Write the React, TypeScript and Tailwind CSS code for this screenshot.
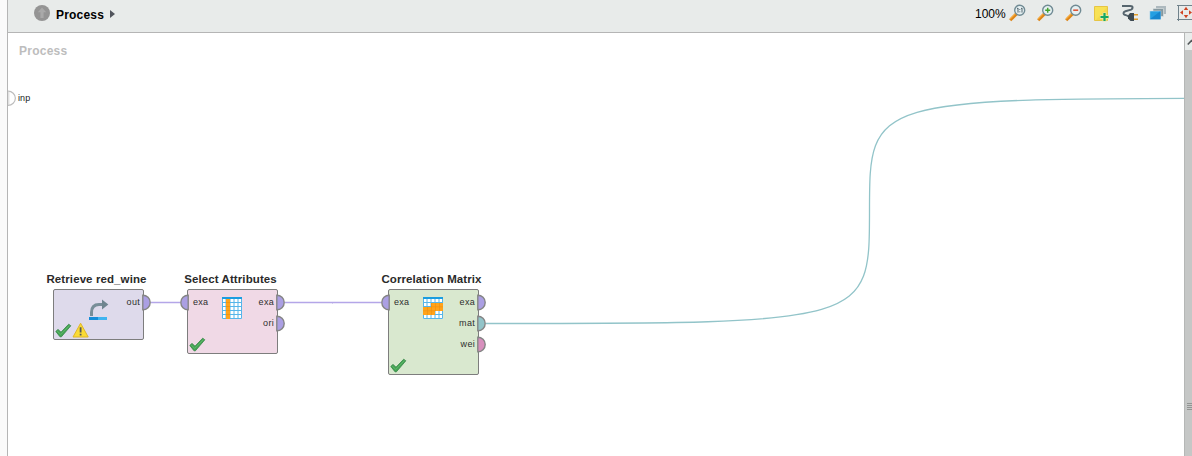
import React from "react";

type Port = { label: string; fill: string };
type Operator = {
  title: string;
  place: string;
  box: string;
  inputs: Port[];
  outputs: Port[];
  icon: React.ReactNode;
  warning?: boolean;
};

const PURPLE = "#ab9fe3";
const TEAL = "#92c4c9";
const PINK = "#d78fbd";

function Magnifier({ children }: { children: React.ReactNode }) {
  return (
    <svg width="18" height="18" viewBox="0 0 18 18" className="shrink-0">
      <path d="M1.2 16.2 7.8 9.6" stroke="#dd8417" strokeWidth="3" />
      <path d="M1 15 7 9" stroke="#f6ab3c" strokeWidth="1.1" />
      <circle cx="10.7" cy="6.2" r="5" fill="#e6f0f2" stroke="#708b94" strokeWidth="1.4" />
      {children}
    </svg>
  );
}

function NoteIcon() {
  return (
    <svg width="18" height="18" viewBox="0 0 18 18" className="shrink-0">
      <path d="M1.5 2.5h13v14h-13z" fill="#f8e255" stroke="#e6c544" />
      <path d="M3 16 14 3v13z" fill="#f0d343" opacity=".55" />
      <path d="M11.5 8.5v9M7 13h9" stroke="#f0e7a0" strokeWidth="4" />
      <path d="M11.5 9v8M7.5 13h8" stroke="#16a864" strokeWidth="2.2" />
    </svg>
  );
}

function PlugIcon() {
  return (
    <svg width="18" height="18" viewBox="0 0 18 18" className="shrink-0">
      <path d="M1 2h8.3c2.9 0 2.9 2.7.8 3.6L4.4 7.2C1.7 8.2 2 10.4 4.2 10.9c1.5.4 2.8 1 4 2.1" fill="none" stroke="#56656e" strokeWidth="2" />
      <path d="M7 11.5 9 9h4v8H9.5L7 14.5z" fill="#3e4a52" />
      <path d="M13 10.8h4M13 15.3h4" stroke="#e29c28" strokeWidth="1.5" />
    </svg>
  );
}

function LayersIcon() {
  return (
    <svg width="18" height="18" viewBox="0 0 18 18" className="shrink-0">
      <path d="M7 2h10v8H7z" fill="#adb9be" />
      <path d="M4 4.5h10.5v8H4z" fill="#84989f" stroke="#e3e8e9" strokeWidth=".6" />
      <path d="M.8 7h11v8.5H.8z" fill="#249fe2" stroke="#e8ebea" strokeWidth=".5" />
      <path d="M1 15.3 11.5 7v8.3z" fill="#1686cf" />
    </svg>
  );
}

function FitIcon() {
  return (
    <svg width="18" height="18" viewBox="0 0 18 18" className="shrink-0">
      <path d="M1.5 1v16M16.5 1v16M0 1.5h18M0 15.5h18" stroke="#70828b" />
      <path d="M9 2.8 11.2 6H6.8zM9 14.2 6.8 11h4.4zM3 8.5 6 6.3v4.4zM15 8.5l-3 2.2V6.3z" fill="#cf4424" />
    </svg>
  );
}

function Check() {
  return (
    <svg width="17" height="15" viewBox="0 0 17 15">
      <path d="M.8 8.4 3 6.4 6 9.2 13.7 1.2 15.8 2.8 6.4 13.8H5z" fill="#43a454" stroke="#358545" strokeWidth=".8" strokeLinejoin="round" />
      <path d="M2.2 8.2 5.8 11.4 14.5 2.5" stroke="#63b86b" strokeWidth=".9" fill="none" />
    </svg>
  );
}

function Warning() {
  return (
    <svg width="17" height="16" viewBox="0 0 17 16">
      <path d="M8.6 1.2 16.2 15H1z" fill="#fadb35" stroke="#dfb52a" strokeWidth="1" strokeLinejoin="round" />
      <path d="M8.6 5.2v5.3M8.6 11.7v1.8" stroke="#56595a" strokeWidth="1.8" />
    </svg>
  );
}

function RetrieveIcon() {
  return (
    <svg width="20" height="21" viewBox="0 0 20 21">
      <path d="M2.5 17v-3.5c0-5.5 3-8 7.5-8h4" stroke="#788e98" strokeWidth="3" fill="none" />
      <path d="M13 .5 19.3 5.5 13 10.5z" fill="#6f858f" />
      <path d="M0 18h9v3H0z" fill="#168dd8" />
      <path d="M9 18h9v3H9z" fill="#40b4f0" />
    </svg>
  );
}

function TableIcon({ matrix = false }: { matrix?: boolean }) {
  return (
    <svg width="20" height="22" viewBox="0 0 20 22">
      <path d="M0 0h20v22H0z" fill="#fff" />
      <path d="M.5 2v19.5h19V2M4 2v20M8 2v20M12 2v20M16 2v20M0 5.5h20M0 9.5h20M0 13.5h20M0 17.5h20" stroke="#55b5ea" fill="none" />
      <path d="M0 0h20v2H0z" fill="#1b9de0" />
      {matrix ? (
        <>
          <path d="M8 6h12v8h-8v4H0v-8h8z" fill="#ffa31a" />
          <path d="M8.5 6v12M4.5 10v8M12.5 6v8M16.5 6v8M8 9.8h12M0 13.8h12" stroke="#ef9012" strokeWidth=".7" />
        </>
      ) : (
        <>
          <path d="M4 2h4v20H4z" fill="#ffa31a" />
          <path d="M4 5.5h4M4 9.5h4M4 13.5h4M4 17.5h4" stroke="#ed9010" strokeWidth=".8" />
        </>
      )}
    </svg>
  );
}

function Connector({ port, input = false }: { port: Port; input?: boolean }) {
  return (
    <div className={`flex h-[21px] items-center ${input ? "flex-row" : "flex-row-reverse"}`}>
      <svg width="9" height="17" viewBox="0 0 9 17" className={`shrink-0 ${input ? "-ml-2" : "-mr-2 -scale-x-100"}`}>
        <path d="M8.2 1.2A7.4 7.3 0 0 0 8.2 15.8z" fill={port.fill} stroke="#858585" strokeWidth="1.4" />
      </svg>
      <span className={`pb-px text-[9px] leading-none tracking-[0.3px] text-[#2e2e2e] ${input ? "ml-1" : "mr-[2px]"}`}>{port.label}</span>
    </div>
  );
}

const operators: Operator[] = [
  {
    title: "Retrieve red_wine",
    place: "left-[45px] top-[256px] h-[51px]",
    box: "bg-[#dedaeb]",
    inputs: [],
    outputs: [{ label: "out", fill: PURPLE }],
    icon: <RetrieveIcon />,
    warning: true,
  },
  {
    title: "Select Attributes",
    place: "left-[179px] top-[256px] h-[65px]",
    box: "bg-[#f0d9e6]",
    inputs: [{ label: "exa", fill: PURPLE }],
    outputs: [
      { label: "exa", fill: PURPLE },
      { label: "ori", fill: PURPLE },
    ],
    icon: <TableIcon />,
  },
  {
    title: "Correlation Matrix",
    place: "left-[380px] top-[256px] h-[86px]",
    box: "bg-[#d9e8cf]",
    inputs: [{ label: "exa", fill: PURPLE }],
    outputs: [
      { label: "exa", fill: PURPLE },
      { label: "mat", fill: TEAL },
      { label: "wei", fill: PINK },
    ],
    icon: <TableIcon matrix />,
  },
];

function OperatorNode({ op }: { op: Operator }) {
  return (
    <div className={`absolute w-[91px] ${op.place}`}>
      <div className="absolute -top-4 left-[43.5px] -translate-x-1/2 text-[11.5px] leading-[13px] font-bold tracking-[0.1px] whitespace-nowrap text-[#2a2a2a]">
        {op.title}
      </div>
      <div className={`flex h-full justify-between rounded-[2px] border border-[#7d7d7d] pt-[2px] ${op.box}`}>
        <div className="w-[30px]">
          {op.inputs.map((p) => (
            <Connector key={p.label} port={p} input />
          ))}
        </div>
        <div className="w-[30px]">
          {op.outputs.map((p) => (
            <Connector key={p.label} port={p} />
          ))}
        </div>
      </div>
      <div className={`absolute ${op.warning ? "left-9 top-[10px]" : "left-[35px] top-2"}`}>{op.icon}</div>
      <div className="absolute bottom-[2px] left-[2px] flex items-end">
        <Check />
        {op.warning && <Warning />}
      </div>
    </div>
  );
}

export default function App() {
  return (
    <div className="flex h-[456px] w-[1192px] overflow-hidden bg-[#fafafa] font-['Liberation_Sans',Arial,sans-serif]">
      <div className="w-[7px] shrink-0" />
      <main className="flex w-[1185px] shrink-0 flex-col border-l border-[#b5b5b5]">
        <header className="flex h-[33px] shrink-0 items-start justify-between border-b border-[#b5b5b5] bg-[#e8ebea]">
          <div className="flex items-start pt-[5px] pl-[26px]">
            <svg width="16" height="16" viewBox="0 0 16 16">
              <circle cx="8" cy="8" r="8" fill="#949494" />
              <path d="m8 2.5 4.2 4.8H9.6V13H6.4V7.3H3.8z" fill="#a9a9a9" />
            </svg>
            <span className="mt-[2px] ml-[6px] text-[12px] leading-4 font-bold tracking-[0.2px] text-black">Process</span>
            <svg width="5" height="8" viewBox="0 0 5 8" className="mt-[5px] ml-[6px]">
              <path d="m0 0 5 4-5 4z" fill="#50545c" />
            </svg>
          </div>
          <div className="flex w-[217px] shrink-0 items-start pt-1">
            <span className="mt-[2px] w-[34px] shrink-0 text-[12px] leading-4 text-black">100%</span>
            <div className="flex gap-[10px]">
              <Magnifier>
                <path d="M8 4.7 9 4v4.6M12 4.7l1-.7v4.6M10.8 5v.9M10.8 7.4v.9" stroke="#53666f" strokeWidth="1" fill="none" />
              </Magnifier>
              <Magnifier>
                <path d="M10.7 3.7v5M8.2 6.2h5" stroke="#43a32e" strokeWidth="1.5" />
              </Magnifier>
              <Magnifier>
                <path d="M8.2 6.2h5" stroke="#df4b2d" strokeWidth="1.5" />
              </Magnifier>
              <NoteIcon />
              <PlugIcon />
              <LayersIcon />
              <FitIcon />
            </div>
          </div>
        </header>
        <div className="flex min-h-0 flex-1">
          <section className="relative w-[1176px] shrink-0 overflow-hidden bg-white">
            <h2 className="pt-[10px] pl-[11px] text-[12px] leading-4 font-bold tracking-[0.25px] text-[#bdbdbd]">Process</h2>
            <svg width="1176" height="423" viewBox="8 33 1176 423" className="absolute inset-0" fill="none">
              <path d="M151 302.5H180M285 302.5H381" stroke="#b4a6e8" strokeWidth="1.3" />
              <path d="M332 303.5h1" stroke="#d2caef" />
              <path d="M486 323.5C869.5 323.5 869.5 323.5 869.5 211C869.5 98 869.5 98.3 1253 98.3" stroke="#92c4c9" strokeWidth="1.3" />
              <path d="M8 91.2A7.3 7 0 0 1 8 105.3" stroke="#bdbdbd" strokeWidth="1.2" />
              <path d="M8.8 91.5v13.5" stroke="#d4d4d4" />
            </svg>
            <span className="absolute top-[60px] left-[10px] text-[9px] leading-[10px] tracking-[0.1px] text-[#222]">inp</span>
            {operators.map((op) => (
              <OperatorNode key={op.title} op={op} />
            ))}
          </section>
          <aside className="flex w-2 shrink-0 flex-col border-l border-[#b5b7b6] bg-[#c5c7c6]">
            <div className="h-[17px] w-[7px] bg-[#e9eceb]">
              <svg width="7" height="17" viewBox="0 0 7 17">
                <path d="M2.8 11.5 7 7" stroke="#53585a" strokeWidth="1.6" />
              </svg>
            </div>
            <div className="mt-[353px] ml-[2px] flex flex-col gap-px">
              <div className="h-px bg-[#929493]" />
              <div className="h-px bg-[#929493]" />
              <div className="h-px bg-[#929493]" />
              <div className="h-px bg-[#929493]" />
            </div>
          </aside>
        </div>
      </main>
    </div>
  );
}
